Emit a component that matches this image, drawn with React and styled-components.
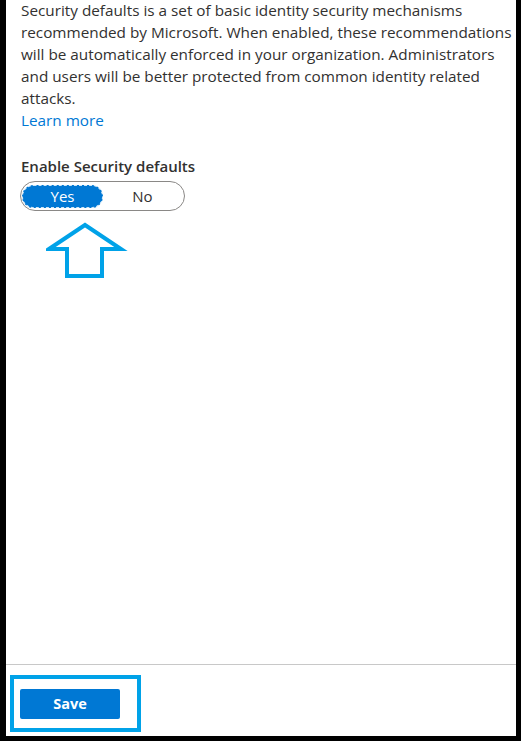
import React from "react";
import styled, { createGlobalStyle } from "styled-components";

const Global = createGlobalStyle`
  html, body { margin: 0; padding: 0; background: #000; }
  body { font-family: "Open Sans", "Noto Sans", sans-serif; }
`;

const Frame = styled.div`
  width: 521px;
  height: 741px;
  box-sizing: border-box;
  border-left: 6px solid #000;
  border-right: 5px solid #000;
  border-bottom: 5px solid #000;
  background: #fff;
  display: flex;
  flex-direction: column;
  overflow: hidden;
`;

const Body = styled.div`
  flex: 1;
  padding: 0 0 0 15px;
  display: flex;
  flex-direction: column;
  overflow: hidden;
`;

const Description = styled.p`
  margin: -1px 0 0;
  font-size: 15.3px;
  line-height: 22px;
  color: #323130;
  white-space: nowrap;
`;

const Link = styled.a`
  display: block;
  font-size: 15.3px;
  line-height: 22px;
  color: #0078d4;
  text-decoration: none;
`;

const Label = styled.div`
  margin-top: 24px;
  font-size: 15px;
  line-height: 22px;
  font-weight: 600;
  color: #323130;
`;

const Toggle = styled.div`
  margin-top: 4px;
  margin-left: -1px;
  width: 165px;
  height: 30px;
  box-sizing: border-box;
  border: 1px solid #8a8886;
  border-radius: 15px;
  display: flex;
  align-items: center;
  padding: 0 2px 0 1px;
`;

const Option = styled.div`
  flex: 1;
  height: 23px;
  box-sizing: border-box;
  border-radius: 12px;
  display: flex;
  align-items: center;
  justify-content: center;
  font-size: 15px;
  color: ${(p) => (p.$active ? "#fff" : "#323130")};
  background: ${(p) => (p.$active ? "#0078d4" : "transparent")};
  border: ${(p) => (p.$active ? "1px dashed #cde6f7" : "none")};
`;

const ArrowWrap = styled.div`
  margin-top: 10px;
  margin-left: 25px;
  width: 84px;
  height: 60px;
`;

const Footer = styled.div`
  border-top: 1px solid #c8c8c8;
  padding: 10px 0 0 4px;
  height: 72px;
  box-sizing: border-box;
`;

const Highlight = styled.div`
  width: 131px;
  height: 57px;
  box-sizing: border-box;
  border: 4px solid #00a2e8;
  display: flex;
  align-items: center;
  padding-left: 6px;
`;

const SaveButton = styled.button`
  width: 100px;
  height: 30px;
  border: none;
  border-radius: 2px;
  background: #0078d4;
  color: #fff;
  font-family: "Open Sans", "Noto Sans", sans-serif;
  font-weight: 700;
  font-size: 14.5px;
  padding: 0;
`;

export default function App() {
  return (
    <>
      <Global />
      <Frame>
        <Body>
          <Description>
            Security defaults is a set of basic identity security mechanisms
            <br />
            recommended by Microsoft. When enabled, these recommendations
            <br />
            will be automatically enforced in your organization. Administrators
            <br />
            and users will be better protected from common identity related
            <br />
            attacks.
          </Description>
          <Link href="#">Learn more</Link>
          <Label>Enable Security defaults</Label>
          <Toggle>
            <Option $active>Yes</Option>
            <Option>No</Option>
          </Toggle>
          <ArrowWrap>
            <svg width="84" height="60" viewBox="0 0 84 60">
              <polygon
                points="39,4 75,28 56,28 56,55 21,55 21,28 3,28"
                fill="none"
                stroke="#00a2e8"
                strokeWidth="4"
                strokeLinejoin="miter"
              />
            </svg>
          </ArrowWrap>
        </Body>
        <Footer>
          <Highlight>
            <SaveButton>Save</SaveButton>
          </Highlight>
        </Footer>
      </Frame>
    </>
  );
}
